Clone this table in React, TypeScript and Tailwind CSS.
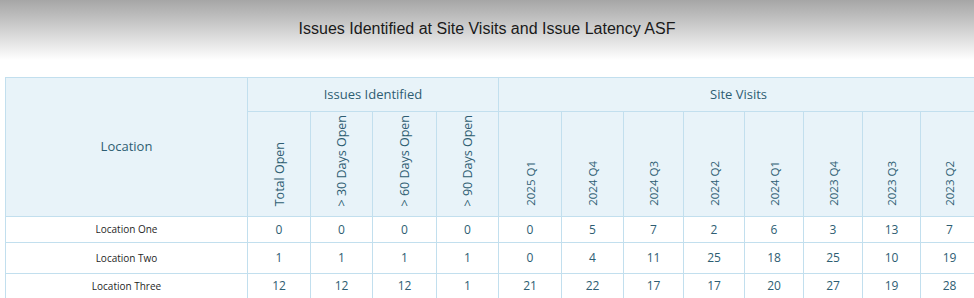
const issueCols = ["Total Open", "> 30 Days Open", "> 60 Days Open", "> 90 Days Open"];
const visitCols = ["2025 Q1", "2024 Q4", "2024 Q3", "2024 Q2", "2024 Q1", "2023 Q4", "2023 Q3", "2023 Q2"];
const widths = [63, 62, 64, 62, 63, 62, 60, 61, 59, 59, 58, 58];

const rows = [
  { name: "Location One", h: "h-[26px]", values: [0, 0, 0, 0, 0, 5, 7, 2, 6, 3, 13, 7] },
  { name: "Location Two", h: "h-[31px]", values: [1, 1, 1, 1, 0, 4, 11, 25, 18, 25, 10, 19] },
  { name: "Location Three", h: "h-[25px]", values: [12, 12, 12, 1, 21, 22, 17, 17, 20, 27, 19, 28] },
];

const cell = "border border-[#c2dfee]";

export default function App() {
  return (
    <div className="w-[974px] h-[298px] overflow-hidden bg-white font-['Open_Sans',sans-serif]">
      <div className="h-[60px] bg-gradient-to-b from-[#a6a6a6] to-white flex items-center justify-center pb-[2px]">
        <h1 className="font-['Liberation_Sans',Arial,sans-serif] text-[16px] text-[#1a1a1a]">
          Issues Identified at Site Visits and Issue Latency ASF
        </h1>
      </div>
      <div className="pt-[17px] pl-[5px]">
        <table className="border-collapse table-fixed text-[#2e5d72]" style={{ width: 242 + widths.reduce((a, b) => a + b, 0) }}>
          <colgroup>
            <col style={{ width: 242 }} />
            {widths.map((w, i) => (
              <col key={i} style={{ width: w }} />
            ))}
          </colgroup>
          <thead className="bg-[#e8f3f9]">
            <tr className="h-[34px]">
              <th rowSpan={2} className={`${cell} text-[13px] font-normal`}>
                Location
              </th>
              <th colSpan={4} className={`${cell} text-[13px] font-normal`}>
                Issues Identified
              </th>
              <th colSpan={8} className={`${cell} text-[13px] font-normal`}>
                Site Visits
              </th>
            </tr>
            <tr className="h-[105px]">
              {issueCols.map((c) => (
                <th key={c} className={`${cell} align-bottom text-center pb-[4px] font-normal`}>
                  <span className="inline-block [writing-mode:vertical-rl] rotate-180 text-[12.5px] leading-[15px] whitespace-nowrap">
                    {c}
                  </span>
                </th>
              ))}
              {visitCols.map((c) => (
                <th key={c} className={`${cell} align-bottom text-center pb-[4px] font-normal`}>
                  <span className="inline-block [writing-mode:vertical-rl] rotate-180 text-[11.5px] leading-[13px] whitespace-nowrap">
                    {c}
                  </span>
                </th>
              ))}
            </tr>
          </thead>
          <tbody>
            {rows.map((r) => (
              <tr key={r.name} className={r.h}>
                <td className={`${cell} text-center text-[10px] text-[#1f1f1f]`}>{r.name}</td>
                {r.values.map((v, i) => (
                  <td key={i} className={`${cell} text-center text-[12px]`}>
                    {v}
                  </td>
                ))}
              </tr>
            ))}
          </tbody>
        </table>
      </div>
    </div>
  );
}
